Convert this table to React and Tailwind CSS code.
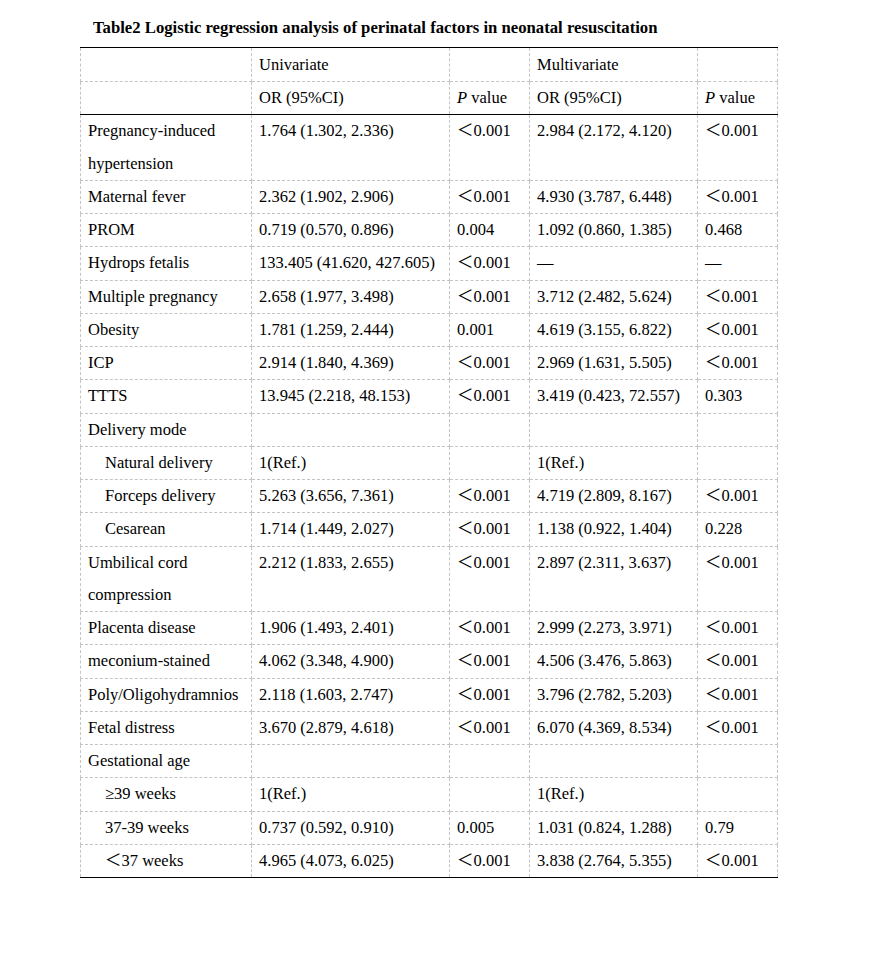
const rows = [
  { label: ["Pregnancy-induced", "hypertension"], u: "1.764 (1.302, 2.336)", up: "＜0.001", m: "2.984 (2.172, 4.120)", mp: "＜0.001" },
  { label: ["Maternal fever"], u: "2.362 (1.902, 2.906)", up: "＜0.001", m: "4.930 (3.787, 6.448)", mp: "＜0.001" },
  { label: ["PROM"], u: "0.719 (0.570, 0.896)", up: "0.004", m: "1.092 (0.860, 1.385)", mp: "0.468" },
  { label: ["Hydrops fetalis"], u: "133.405 (41.620, 427.605)", up: "＜0.001", m: "—", mp: "—" },
  { label: ["Multiple pregnancy"], u: "2.658 (1.977, 3.498)", up: "＜0.001", m: "3.712 (2.482, 5.624)", mp: "＜0.001" },
  { label: ["Obesity"], u: "1.781 (1.259, 2.444)", up: "0.001", m: "4.619 (3.155, 6.822)", mp: "＜0.001" },
  { label: ["ICP"], u: "2.914 (1.840, 4.369)", up: "＜0.001", m: "2.969 (1.631, 5.505)", mp: "＜0.001" },
  { label: ["TTTS"], u: "13.945 (2.218, 48.153)", up: "＜0.001", m: "3.419 (0.423, 72.557)", mp: "0.303" },
  { label: ["Delivery mode"], u: "", up: "", m: "", mp: "" },
  { label: ["Natural delivery"], indent: true, u: "1(Ref.)", up: "", m: "1(Ref.)", mp: "" },
  { label: ["Forceps delivery"], indent: true, u: "5.263 (3.656, 7.361)", up: "＜0.001", m: "4.719 (2.809, 8.167)", mp: "＜0.001" },
  { label: ["Cesarean"], indent: true, u: "1.714 (1.449, 2.027)", up: "＜0.001", m: "1.138 (0.922, 1.404)", mp: "0.228" },
  { label: ["Umbilical cord", "compression"], u: "2.212 (1.833, 2.655)", up: "＜0.001", m: "2.897 (2.311, 3.637)", mp: "＜0.001" },
  { label: ["Placenta disease"], u: "1.906 (1.493, 2.401)", up: "＜0.001", m: "2.999 (2.273, 3.971)", mp: "＜0.001" },
  { label: ["meconium-stained"], u: "4.062 (3.348, 4.900)", up: "＜0.001", m: "4.506 (3.476, 5.863)", mp: "＜0.001" },
  { label: ["Poly/Oligohydramnios"], u: "2.118 (1.603, 2.747)", up: "＜0.001", m: "3.796 (2.782, 5.203)", mp: "＜0.001" },
  { label: ["Fetal distress"], u: "3.670 (2.879, 4.618)", up: "＜0.001", m: "6.070 (4.369, 8.534)", mp: "＜0.001" },
  { label: ["Gestational age"], u: "", up: "", m: "", mp: "" },
  { label: ["≥39 weeks"], indent: true, u: "1(Ref.)", up: "", m: "1(Ref.)", mp: "" },
  { label: ["37-39 weeks"], indent: true, u: "0.737 (0.592, 0.910)", up: "0.005", m: "1.031 (0.824, 1.288)", mp: "0.79" },
  { label: ["＜37 weeks"], indent: true, u: "4.965 (4.073, 6.025)", up: "＜0.001", m: "3.838 (2.764, 5.355)", mp: "＜0.001" },
];

const cell = "border border-dashed border-[#c4c4c4] align-top leading-[32.25px] px-[7px] py-0 whitespace-nowrap";
const top = " border-t-black [border-top-style:solid]";
const bottom = " border-b-black [border-bottom-style:solid]";
const head = " font-normal text-left";

export default function App() {
  return (
    <div className="min-h-screen bg-white text-black font-['Liberation_Serif','Noto_Sans_CJK_SC',serif]">
      <div className="pl-[93px] pt-[17px] pb-[8px] text-[16.7px] font-bold leading-[22px]">
        Table2 Logistic regression analysis of perinatal factors in neonatal resuscitation
      </div>
      <table className="ml-[80px] w-[697px] table-fixed border-collapse text-[16.5px]">
        <colgroup>
          <col className="w-[171px]" />
          <col className="w-[198px]" />
          <col className="w-[80px]" />
          <col className="w-[168px]" />
          <col className="w-[80px]" />
        </colgroup>
        <thead>
          <tr>
            <th className={cell + head + top + " leading-[33px]"}></th>
            <th className={cell + head + top + " leading-[33px]"}>Univariate</th>
            <th className={cell + head + top + " leading-[33px]"}></th>
            <th className={cell + head + top + " leading-[33px]"}>Multivariate</th>
            <th className={cell + head + top + " leading-[33px]"}></th>
          </tr>
          <tr>
            <th className={cell + head + bottom + " leading-[31px]"}></th>
            <th className={cell + head + bottom + " leading-[31px]"}>OR (95%CI)</th>
            <th className={cell + head + bottom + " leading-[31px]"}><i>P</i> value</th>
            <th className={cell + head + bottom + " leading-[31px]"}>OR (95%CI)</th>
            <th className={cell + head + bottom + " leading-[31px]"}><i>P</i> value</th>
          </tr>
        </thead>
        <tbody>
          {rows.map((r, i) => {
            const b = i === rows.length - 1 ? bottom : "";
            return (
              <tr key={i}>
                <td className={cell + b}>
                  {r.label.map((l, j) => (
                    <div key={j} className={r.indent ? "pl-[17px]" : ""}>{l}</div>
                  ))}
                </td>
                <td className={cell + b}>{r.u}</td>
                <td className={cell + b}>{r.up}</td>
                <td className={cell + b}>{r.m}</td>
                <td className={cell + b}>{r.mp}</td>
              </tr>
            );
          })}
        </tbody>
      </table>
    </div>
  );
}
